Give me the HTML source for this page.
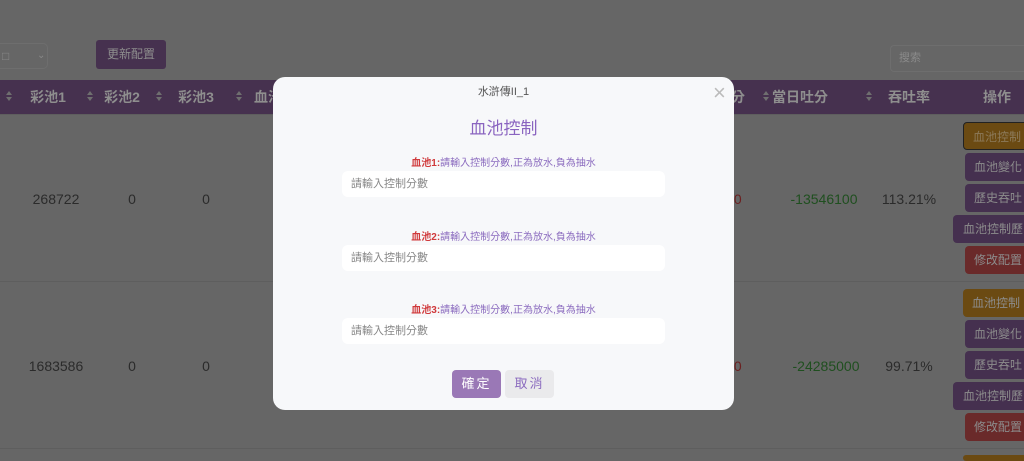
<!DOCTYPE html>
<html style="width:1024px;height:461px;overflow:hidden"><head><meta charset="utf-8"><style>
*{margin:0;padding:0;box-sizing:border-box}
body{width:1024px;height:461px;overflow:hidden;background:#666;font-family:"Liberation Sans","Noto Sans CJK TC",sans-serif;position:relative;color:#333}
.a{position:absolute}
.hd{top:80px;left:0;width:1024px;height:34px;background:#46314f}
.h{position:absolute;top:80px;height:34px;line-height:34px;color:#8e8e8e;font-weight:bold;font-size:14px;transform:translateX(-50%);white-space:nowrap}
.s{position:absolute;top:91px;width:6px;height:12px}
.s:before{content:"";position:absolute;left:0;top:0;border:3px solid transparent;border-bottom:4px solid #6f6f6f;border-top:0}
.s:after{content:"";position:absolute;left:0;top:6px;border:3px solid transparent;border-top:4px solid #6f6f6f;border-bottom:0}
.c{position:absolute;font-size:14px;color:#2b2b2b;transform:translate(-50%,-50%);white-space:nowrap}
.line{position:absolute;left:0;width:1024px;height:1px;background:#5e5e5e}
.b{position:absolute;height:28px;line-height:28px;font-size:12px;color:#8c8c8c;background:#45304f;border-radius:4px;padding-left:9px;white-space:nowrap;overflow:hidden;width:70px}
.modal{left:273px;top:77px;width:461px;height:333px;background:#f7f8fa;border-radius:12px}
.lab{position:absolute;left:0;width:461px;text-align:center;font-size:10px;color:#8b6bbf}
.lab b{color:#d0393b}
.in{position:absolute;left:69px;width:323px;height:26px;background:#fff;border-radius:6px;font-size:11px;color:#888;line-height:26px;padding-left:9px}
</style></head><body>
<div class="a" style="left:0;top:43px;width:48px;height:26px;border:1px solid #6e6e6e;border-left:0;border-radius:0 5px 5px 0;font-size:12px;color:#888;line-height:24px;padding-left:2px">□<span style="position:absolute;left:37px;font-size:10px">⌄</span></div>
<div class="a" style="left:96px;top:40px;width:70px;height:29px;background:#46314f;border-radius:3px;color:#8e8e8e;font-size:12px;line-height:29px;text-align:center">更新配置</div>
<div class="a" style="left:890px;top:45px;width:134px;height:27px;border:1px solid #6e6e6e;border-right:0;border-radius:4px 0 0 4px;color:#8a8a8a;font-size:11px;line-height:25px;padding-left:8px">搜索</div>
<div class="a hd"></div>
<div class="s" style="left:6px"></div><div class="h" style="left:48px">彩池1</div>
<div class="s" style="left:87px"></div><div class="h" style="left:122px">彩池2</div>
<div class="s" style="left:156px"></div><div class="h" style="left:196px">彩池3</div>
<div class="s" style="left:236px"></div><div class="h" style="left:268px">血池</div>
<div class="h" style="left:738px">分</div>
<div class="s" style="left:763px"></div><div class="h" style="left:800px">當日吐分</div>
<div class="s" style="left:866px"></div><div class="h" style="left:909px">吞吐率</div>
<div class="h" style="left:997px">操作</div>
<div class="line" style="top:114px"></div>
<div class="line" style="top:281px"></div>
<div class="line" style="top:448px"></div>
<div class="c" style="left:56px;top:199px">268722</div><div class="c" style="left:132px;top:199px">0</div><div class="c" style="left:206px;top:199px">0</div>
<div class="c" style="left:730px;top:199px;color:#6b1f1f">900</div><div class="c" style="left:824px;top:199px;color:#1f4f1f">-13546100</div><div class="c" style="left:909px;top:199px">113.21%</div>
<div class="c" style="left:56px;top:366px">1683586</div><div class="c" style="left:132px;top:366px">0</div><div class="c" style="left:206px;top:366px">0</div>
<div class="c" style="left:730px;top:366px;color:#6b1f1f">000</div><div class="c" style="left:826px;top:366px;color:#1f4f1f">-24285000</div><div class="c" style="left:909px;top:366px">99.71%</div>
<div class="b" style="left:963px;top:122px;background:#6b4a12;border:1px solid #222;color:#8c7a5a">血池控制</div>
<div class="b" style="left:965px;top:153px">血池變化</div>
<div class="b" style="left:965px;top:184px">歷史吞吐</div>
<div class="b" style="left:953px;top:215px;width:80px;padding-left:10px">血池控制歷</div>
<div class="b" style="left:965px;top:246px;background:#6a2a2a">修改配置</div>
<div class="b" style="left:963px;top:289px;background:#6b4a12">血池控制</div>
<div class="b" style="left:965px;top:320px">血池變化</div>
<div class="b" style="left:965px;top:351px">歷史吞吐</div>
<div class="b" style="left:953px;top:382px;width:80px;padding-left:10px">血池控制歷</div>
<div class="b" style="left:965px;top:413px;background:#6a2a2a">修改配置</div>
<div class="b" style="left:963px;top:455px;height:6px;background:#6b4a12"></div>

<div class="a modal">
<div class="a" style="left:0;top:6px;width:461px;text-align:center;font-size:11px;color:#555">水滸傳II_1</div>
<div class="a" style="left:440px;top:4px;font-size:22px;color:#bbb;line-height:24px">×</div>
<div class="a" style="left:0;top:37px;width:461px;text-align:center;font-size:17px;color:#8a64c0">血池控制</div>
<div class="lab" style="top:77px"><b>血池1:</b>請輸入控制分數,正為放水,負為抽水</div>
<div class="in" style="top:94px">請輸入控制分數</div>
<div class="lab" style="top:151px"><b>血池2:</b>請輸入控制分數,正為放水,負為抽水</div>
<div class="in" style="top:168px">請輸入控制分數</div>
<div class="lab" style="top:224px"><b>血池3:</b>請輸入控制分數,正為放水,負為抽水</div>
<div class="in" style="top:241px">請輸入控制分數</div>
<div class="a" style="left:179px;top:293px;width:49px;height:28px;background:#9a78b6;border-radius:4px;color:#fff;font-size:13px;line-height:28px;text-align:center;letter-spacing:2px">確定</div>
<div class="a" style="left:232px;top:293px;width:49px;height:28px;background:#eaeaec;border-radius:4px;color:#8b6bbf;font-size:13px;line-height:28px;text-align:center;letter-spacing:2px">取消</div>
</div>
</body></html>
